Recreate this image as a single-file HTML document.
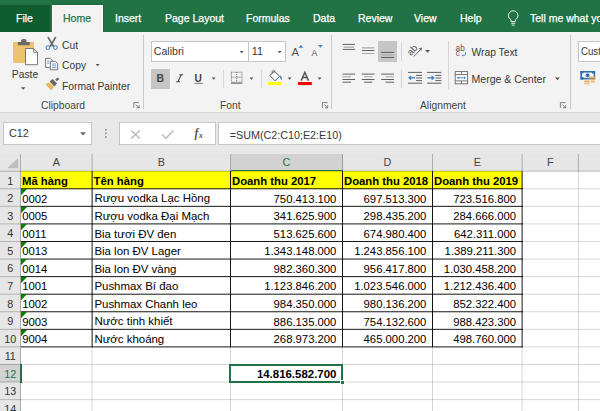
<!DOCTYPE html>
<html><head><meta charset="utf-8">
<style>
*{margin:0;padding:0;box-sizing:border-box}
html,body{width:600px;height:411px;overflow:hidden;background:#fff;font-family:"Liberation Sans",sans-serif}
.a{position:absolute}
.t{position:absolute;white-space:nowrap;line-height:1}
svg{position:absolute;overflow:visible}
</style></head><body>
<div class="a" style="left:0.00px;top:0.00px;width:600.00px;height:32.00px;background:#217346;"></div>
<div class="a" style="left:0.00px;top:5.00px;width:50.00px;height:27.00px;background:#0f5c2f;"></div>
<div class="a" style="left:51.50px;top:4.00px;width:52.00px;height:29.00px;background:#1a6a3e;"></div>
<div class="a" style="left:52.00px;top:5.00px;width:51.00px;height:28.00px;background:#f3f3f3;border:1px solid #fcfcfc;border-bottom:0;"></div>
<div class="t" style="left:16.00px;top:13.09px;font-size:11px;color:#fff;font-weight:400;transform:scaleX(0.955);transform-origin:0 0;-webkit-text-stroke:0.25px #fff;">File</div>
<div class="t" style="left:63.00px;top:13.09px;font-size:11px;color:#217346;font-weight:400;transform:scaleX(0.955);transform-origin:0 0;-webkit-text-stroke:0.25px #217346;">Home</div>
<div class="t" style="left:115.00px;top:13.09px;font-size:11px;color:#fff;font-weight:400;transform:scaleX(0.955);transform-origin:0 0;-webkit-text-stroke:0.25px #fff;">Insert</div>
<div class="t" style="left:165.00px;top:13.09px;font-size:11px;color:#fff;font-weight:400;transform:scaleX(0.955);transform-origin:0 0;-webkit-text-stroke:0.25px #fff;">Page Layout</div>
<div class="t" style="left:246.00px;top:13.09px;font-size:11px;color:#fff;font-weight:400;transform:scaleX(0.955);transform-origin:0 0;-webkit-text-stroke:0.25px #fff;">Formulas</div>
<div class="t" style="left:313.00px;top:13.09px;font-size:11px;color:#fff;font-weight:400;transform:scaleX(0.955);transform-origin:0 0;-webkit-text-stroke:0.25px #fff;">Data</div>
<div class="t" style="left:358.00px;top:13.09px;font-size:11px;color:#fff;font-weight:400;transform:scaleX(0.955);transform-origin:0 0;-webkit-text-stroke:0.25px #fff;">Review</div>
<div class="t" style="left:414.00px;top:13.09px;font-size:11px;color:#fff;font-weight:400;transform:scaleX(0.955);transform-origin:0 0;-webkit-text-stroke:0.25px #fff;">View</div>
<div class="t" style="left:460.00px;top:13.09px;font-size:11px;color:#fff;font-weight:400;transform:scaleX(0.955);transform-origin:0 0;-webkit-text-stroke:0.25px #fff;">Help</div>
<div class="t" style="left:530.00px;top:13.09px;font-size:11px;color:#fff;font-weight:400;transform:scaleX(0.955);transform-origin:0 0;-webkit-text-stroke:0.25px #fff;">Tell me what you want to do</div>
<svg style="left:0;top:0" width="600" height="32" viewBox="0 0 600 32"><path d="M511 21.6v-1.8q-2.6-1.6-2.6-4.2a4.8 4.8 0 0 1 9.6 0q0 2.6-2.6 4.2v1.8z" fill="none" stroke="#fff" stroke-width="0.9"/><path d="M511.2 23.3h4M511.8 25.1h2.8" stroke="#fff" stroke-width="0.9"/></svg>
<div class="a" style="left:0.00px;top:32.00px;width:600.00px;height:80.00px;background:#f3f3f3;"></div>
<div class="a" style="left:0.00px;top:112.00px;width:600.00px;height:1.00px;background:#d9d9d9;"></div>
<div class="a" style="left:143.00px;top:35.00px;width:1.00px;height:73.50px;background:#c9c9c9;"></div>
<div class="a" style="left:331.00px;top:35.00px;width:1.00px;height:73.50px;background:#c9c9c9;"></div>
<div class="a" style="left:570.00px;top:35.00px;width:1.00px;height:73.50px;background:#c9c9c9;"></div>
<div class="a" style="left:223.00px;top:70.00px;width:1.00px;height:18.00px;background:#d6d6d6;"></div>
<div class="a" style="left:261.00px;top:70.00px;width:1.00px;height:18.00px;background:#d6d6d6;"></div>
<div class="a" style="left:401.00px;top:42.00px;width:1.00px;height:19.00px;background:#d6d6d6;"></div>
<div class="a" style="left:401.00px;top:70.00px;width:1.00px;height:18.00px;background:#d6d6d6;"></div>
<div class="a" style="left:448.00px;top:41.00px;width:1.00px;height:48.00px;background:#d6d6d6;"></div>
<div class="t" style="left:11.80px;top:70.18px;font-size:10.3px;color:#383838;font-weight:400;">Paste</div>
<div class="t" style="left:62.00px;top:41.13px;font-size:10.3px;color:#383838;font-weight:400;">Cut</div>
<div class="t" style="left:62.00px;top:61.13px;font-size:10.3px;color:#383838;font-weight:400;">Copy</div>
<div class="t" style="left:62.00px;top:81.63px;font-size:10.3px;color:#383838;font-weight:400;">Format Painter</div>
<div class="t" style="left:41.00px;top:100.78px;font-size:10.3px;color:#444;font-weight:400;">Clipboard</div>
<div class="t" style="left:220.00px;top:100.78px;font-size:10.3px;color:#444;font-weight:400;">Font</div>
<div class="t" style="left:420.00px;top:100.78px;font-size:10.3px;color:#444;font-weight:400;">Alignment</div>
<div class="t" style="left:471.50px;top:48.28px;font-size:10.3px;color:#383838;font-weight:400;">Wrap Text</div>
<div class="t" style="left:471.50px;top:73.87px;font-size:10.55px;color:#383838;font-weight:400;">Merge &amp; Center</div>
<div class="a" style="left:151.00px;top:41.00px;width:135.00px;height:21.00px;background:#fff;border:1px solid #c6c6c6;"></div>
<div class="a" style="left:247.50px;top:41.00px;width:1.00px;height:21.00px;background:#c6c6c6;"></div>
<div class="t" style="left:153.80px;top:46.43px;font-size:10.6px;color:#383838;font-weight:400;">Calibri</div>
<div class="t" style="left:251.70px;top:46.36px;font-size:10.8px;color:#383838;font-weight:400;">11</div>
<div class="a" style="left:578.00px;top:41.00px;width:42.00px;height:21.00px;background:#fff;border:1px solid #c6c6c6;"></div>
<div class="t" style="left:580.80px;top:46.29px;font-size:11px;color:#383838;font-weight:400;transform:scaleX(0.88);transform-origin:0 0;">Custom</div>
<div class="a" style="left:151.00px;top:69.00px;width:19.00px;height:20.00px;background:#c6c6c6;"></div>
<div class="a" style="left:378.00px;top:41.00px;width:19.00px;height:20.50px;background:#c6c6c6;"></div>
<div class="a" style="left:0.00px;top:113.00px;width:600.00px;height:41.00px;background:#e8e8e8;"></div>
<div class="a" style="left:3.00px;top:122.00px;width:89.00px;height:22.50px;background:#fff;border:1px solid #c6c6c6;"></div>
<div class="t" style="left:9.00px;top:127.86px;font-size:10.8px;color:#383838;font-weight:400;">C12</div>
<div class="a" style="left:119.00px;top:122.00px;width:97.00px;height:22.50px;background:#fff;border:1px solid #c6c6c6;"></div>
<div class="a" style="left:218.00px;top:122.00px;width:432.00px;height:22.50px;background:#fff;border:1px solid #c6c6c6;"></div>
<div class="t" style="left:229.75px;top:130.40px;font-size:10.75px;color:#383838;font-weight:400;">=SUM(C2:C10;E2:E10)</div>
<div class="a" style="left:0.00px;top:154.00px;width:600.00px;height:257.00px;background:#fff;"></div>
<div class="a" style="left:0.00px;top:154.00px;width:600.00px;height:17.20px;background:#e6e6e6;"></div>
<div class="a" style="left:0.00px;top:171.20px;width:20.50px;height:239.80px;background:#e6e6e6;"></div>
<div class="a" style="left:230.50px;top:154.00px;width:112.00px;height:17.20px;background:#d2d2d2;"></div>
<div class="a" style="left:0.00px;top:364.47px;width:20.50px;height:17.57px;background:#d2d2d2;"></div>
<div class="a" style="left:20.50px;top:171.20px;width:501.70px;height:17.57px;background:#ffff00;"></div>
<div class="a" style="left:21.00px;top:363px;width:579.00px;height:1px;background:rgba(0,0,0,0.005)"></div>
<div class="a" style="left:21.00px;top:364px;width:579.00px;height:1px;background:rgba(0,0,0,0.155)"></div>
<div class="a" style="left:21.00px;top:381px;width:579.00px;height:1px;background:rgba(0,0,0,0.074)"></div>
<div class="a" style="left:21.00px;top:382px;width:579.00px;height:1px;background:rgba(0,0,0,0.086)"></div>
<div class="a" style="left:21.00px;top:399px;width:579.00px;height:1px;background:rgba(0,0,0,0.142)"></div>
<div class="a" style="left:21.00px;top:400px;width:579.00px;height:1px;background:rgba(0,0,0,0.018)"></div>
<div class="a" style="left:21.00px;top:416px;width:579.00px;height:1px;background:rgba(0,0,0,0.051)"></div>
<div class="a" style="left:21.00px;top:417px;width:579.00px;height:1px;background:rgba(0,0,0,0.109)"></div>
<div class="a" style="left:522.50px;top:188px;width:77.50px;height:1px;background:rgba(0,0,0,0.117)"></div>
<div class="a" style="left:522.50px;top:189px;width:77.50px;height:1px;background:rgba(0,0,0,0.043)"></div>
<div class="a" style="left:522.50px;top:205px;width:77.50px;height:1px;background:rgba(0,0,0,0.026)"></div>
<div class="a" style="left:522.50px;top:206px;width:77.50px;height:1px;background:rgba(0,0,0,0.134)"></div>
<div class="a" style="left:522.50px;top:223px;width:77.50px;height:1px;background:rgba(0,0,0,0.094)"></div>
<div class="a" style="left:522.50px;top:224px;width:77.50px;height:1px;background:rgba(0,0,0,0.066)"></div>
<div class="a" style="left:522.50px;top:240px;width:77.50px;height:1px;background:rgba(0,0,0,0.003)"></div>
<div class="a" style="left:522.50px;top:241px;width:77.50px;height:1px;background:rgba(0,0,0,0.157)"></div>
<div class="a" style="left:522.50px;top:258px;width:77.50px;height:1px;background:rgba(0,0,0,0.072)"></div>
<div class="a" style="left:522.50px;top:259px;width:77.50px;height:1px;background:rgba(0,0,0,0.088)"></div>
<div class="a" style="left:522.50px;top:276px;width:77.50px;height:1px;background:rgba(0,0,0,0.141)"></div>
<div class="a" style="left:522.50px;top:277px;width:77.50px;height:1px;background:rgba(0,0,0,0.019)"></div>
<div class="a" style="left:522.50px;top:293px;width:77.50px;height:1px;background:rgba(0,0,0,0.050)"></div>
<div class="a" style="left:522.50px;top:294px;width:77.50px;height:1px;background:rgba(0,0,0,0.110)"></div>
<div class="a" style="left:522.50px;top:311px;width:77.50px;height:1px;background:rgba(0,0,0,0.118)"></div>
<div class="a" style="left:522.50px;top:312px;width:77.50px;height:1px;background:rgba(0,0,0,0.042)"></div>
<div class="a" style="left:522.50px;top:328px;width:77.50px;height:1px;background:rgba(0,0,0,0.027)"></div>
<div class="a" style="left:522.50px;top:329px;width:77.50px;height:1px;background:rgba(0,0,0,0.133)"></div>
<div class="a" style="left:522.50px;top:346px;width:77.50px;height:1px;background:rgba(0,0,0,0.096)"></div>
<div class="a" style="left:522.50px;top:347px;width:77.50px;height:1px;background:rgba(0,0,0,0.064)"></div>
<div class="a" style="left:91px;top:346.90px;width:1px;height:64.10px;background:rgba(0,0,0,0.064)"></div>
<div class="a" style="left:92px;top:346.90px;width:1px;height:64.10px;background:rgba(0,0,0,0.096)"></div>
<div class="a" style="left:230px;top:346.90px;width:1px;height:64.10px;background:rgba(0,0,0,0.160)"></div>
<div class="a" style="left:342px;top:346.90px;width:1px;height:64.10px;background:rgba(0,0,0,0.160)"></div>
<div class="a" style="left:432px;top:346.90px;width:1px;height:64.10px;background:rgba(0,0,0,0.160)"></div>
<div class="a" style="left:521px;top:346.90px;width:1px;height:64.10px;background:rgba(0,0,0,0.064)"></div>
<div class="a" style="left:522px;top:346.90px;width:1px;height:64.10px;background:rgba(0,0,0,0.096)"></div>
<div class="a" style="left:577px;top:171.20px;width:1px;height:239.80px;background:rgba(0,0,0,0.016)"></div>
<div class="a" style="left:578px;top:171.20px;width:1px;height:239.80px;background:rgba(0,0,0,0.144)"></div>
<div class="a" style="left:91px;top:154.00px;width:1px;height:17.20px;background:rgba(0,0,0,0.100)"></div>
<div class="a" style="left:92px;top:154.00px;width:1px;height:17.20px;background:rgba(0,0,0,0.150)"></div>
<div class="a" style="left:230px;top:154.00px;width:1px;height:17.20px;background:rgba(0,0,0,0.250)"></div>
<div class="a" style="left:342px;top:154.00px;width:1px;height:17.20px;background:rgba(0,0,0,0.250)"></div>
<div class="a" style="left:432px;top:154.00px;width:1px;height:17.20px;background:rgba(0,0,0,0.250)"></div>
<div class="a" style="left:521px;top:154.00px;width:1px;height:17.20px;background:rgba(0,0,0,0.100)"></div>
<div class="a" style="left:522px;top:154.00px;width:1px;height:17.20px;background:rgba(0,0,0,0.150)"></div>
<div class="a" style="left:577px;top:154.00px;width:1px;height:17.20px;background:rgba(0,0,0,0.025)"></div>
<div class="a" style="left:578px;top:154.00px;width:1px;height:17.20px;background:rgba(0,0,0,0.225)"></div>
<div class="a" style="left:20px;top:154.00px;width:1px;height:257.00px;background:rgba(0,0,0,0.250)"></div>
<div class="a" style="left:0.00px;top:188px;width:20.50px;height:1px;background:rgba(0,0,0,0.161)"></div>
<div class="a" style="left:0.00px;top:189px;width:20.50px;height:1px;background:rgba(0,0,0,0.059)"></div>
<div class="a" style="left:0.00px;top:205px;width:20.50px;height:1px;background:rgba(0,0,0,0.035)"></div>
<div class="a" style="left:0.00px;top:206px;width:20.50px;height:1px;background:rgba(0,0,0,0.185)"></div>
<div class="a" style="left:0.00px;top:223px;width:20.50px;height:1px;background:rgba(0,0,0,0.130)"></div>
<div class="a" style="left:0.00px;top:224px;width:20.50px;height:1px;background:rgba(0,0,0,0.090)"></div>
<div class="a" style="left:0.00px;top:240px;width:20.50px;height:1px;background:rgba(0,0,0,0.004)"></div>
<div class="a" style="left:0.00px;top:241px;width:20.50px;height:1px;background:rgba(0,0,0,0.216)"></div>
<div class="a" style="left:0.00px;top:258px;width:20.50px;height:1px;background:rgba(0,0,0,0.099)"></div>
<div class="a" style="left:0.00px;top:259px;width:20.50px;height:1px;background:rgba(0,0,0,0.121)"></div>
<div class="a" style="left:0.00px;top:276px;width:20.50px;height:1px;background:rgba(0,0,0,0.194)"></div>
<div class="a" style="left:0.00px;top:277px;width:20.50px;height:1px;background:rgba(0,0,0,0.026)"></div>
<div class="a" style="left:0.00px;top:293px;width:20.50px;height:1px;background:rgba(0,0,0,0.068)"></div>
<div class="a" style="left:0.00px;top:294px;width:20.50px;height:1px;background:rgba(0,0,0,0.152)"></div>
<div class="a" style="left:0.00px;top:311px;width:20.50px;height:1px;background:rgba(0,0,0,0.163)"></div>
<div class="a" style="left:0.00px;top:312px;width:20.50px;height:1px;background:rgba(0,0,0,0.057)"></div>
<div class="a" style="left:0.00px;top:328px;width:20.50px;height:1px;background:rgba(0,0,0,0.037)"></div>
<div class="a" style="left:0.00px;top:329px;width:20.50px;height:1px;background:rgba(0,0,0,0.183)"></div>
<div class="a" style="left:0.00px;top:346px;width:20.50px;height:1px;background:rgba(0,0,0,0.132)"></div>
<div class="a" style="left:0.00px;top:347px;width:20.50px;height:1px;background:rgba(0,0,0,0.088)"></div>
<div class="a" style="left:0.00px;top:363px;width:20.50px;height:1px;background:rgba(0,0,0,0.007)"></div>
<div class="a" style="left:0.00px;top:364px;width:20.50px;height:1px;background:rgba(0,0,0,0.213)"></div>
<div class="a" style="left:0.00px;top:381px;width:20.50px;height:1px;background:rgba(0,0,0,0.101)"></div>
<div class="a" style="left:0.00px;top:382px;width:20.50px;height:1px;background:rgba(0,0,0,0.119)"></div>
<div class="a" style="left:0.00px;top:399px;width:20.50px;height:1px;background:rgba(0,0,0,0.196)"></div>
<div class="a" style="left:0.00px;top:400px;width:20.50px;height:1px;background:rgba(0,0,0,0.024)"></div>
<div class="a" style="left:0.00px;top:416px;width:20.50px;height:1px;background:rgba(0,0,0,0.070)"></div>
<div class="a" style="left:0.00px;top:417px;width:20.50px;height:1px;background:rgba(0,0,0,0.150)"></div>
<div class="a" style="left:0.00px;top:170px;width:600.00px;height:1px;background:rgba(0,0,0,0.075)"></div>
<div class="a" style="left:0.00px;top:171px;width:600.00px;height:1px;background:rgba(0,0,0,0.175)"></div>
<div class="a" style="left:20.50px;top:188px;width:502.10px;height:1px;background:rgba(0,0,0,0.672)"></div>
<div class="a" style="left:20.50px;top:189px;width:502.10px;height:1px;background:rgba(0,0,0,0.248)"></div>
<div class="a" style="left:20.50px;top:205px;width:502.10px;height:1px;background:rgba(0,0,0,0.147)"></div>
<div class="a" style="left:20.50px;top:206px;width:502.10px;height:1px;background:rgba(0,0,0,0.773)"></div>
<div class="a" style="left:20.50px;top:223px;width:502.10px;height:1px;background:rgba(0,0,0,0.543)"></div>
<div class="a" style="left:20.50px;top:224px;width:502.10px;height:1px;background:rgba(0,0,0,0.377)"></div>
<div class="a" style="left:20.50px;top:240px;width:502.10px;height:1px;background:rgba(0,0,0,0.018)"></div>
<div class="a" style="left:20.50px;top:241px;width:502.10px;height:1px;background:rgba(0,0,0,0.902)"></div>
<div class="a" style="left:20.50px;top:258px;width:502.10px;height:1px;background:rgba(0,0,0,0.414)"></div>
<div class="a" style="left:20.50px;top:259px;width:502.10px;height:1px;background:rgba(0,0,0,0.506)"></div>
<div class="a" style="left:20.50px;top:276px;width:502.10px;height:1px;background:rgba(0,0,0,0.810)"></div>
<div class="a" style="left:20.50px;top:277px;width:502.10px;height:1px;background:rgba(0,0,0,0.110)"></div>
<div class="a" style="left:20.50px;top:293px;width:502.10px;height:1px;background:rgba(0,0,0,0.285)"></div>
<div class="a" style="left:20.50px;top:294px;width:502.10px;height:1px;background:rgba(0,0,0,0.635)"></div>
<div class="a" style="left:20.50px;top:311px;width:502.10px;height:1px;background:rgba(0,0,0,0.681)"></div>
<div class="a" style="left:20.50px;top:312px;width:502.10px;height:1px;background:rgba(0,0,0,0.239)"></div>
<div class="a" style="left:20.50px;top:328px;width:502.10px;height:1px;background:rgba(0,0,0,0.156)"></div>
<div class="a" style="left:20.50px;top:329px;width:502.10px;height:1px;background:rgba(0,0,0,0.764)"></div>
<div class="a" style="left:20.50px;top:346px;width:502.10px;height:1px;background:rgba(0,0,0,0.552)"></div>
<div class="a" style="left:20.50px;top:347px;width:502.10px;height:1px;background:rgba(0,0,0,0.368)"></div>
<div class="a" style="left:91px;top:171.20px;width:1px;height:176.20px;background:rgba(0,0,0,0.368)"></div>
<div class="a" style="left:92px;top:171.20px;width:1px;height:176.20px;background:rgba(0,0,0,0.552)"></div>
<div class="a" style="left:230px;top:171.20px;width:1px;height:176.20px;background:rgba(0,0,0,0.920)"></div>
<div class="a" style="left:342px;top:171.20px;width:1px;height:176.20px;background:rgba(0,0,0,0.920)"></div>
<div class="a" style="left:432px;top:171.20px;width:1px;height:176.20px;background:rgba(0,0,0,0.920)"></div>
<div class="a" style="left:521px;top:171.20px;width:1px;height:176.20px;background:rgba(0,0,0,0.368)"></div>
<div class="a" style="left:522px;top:171.20px;width:1px;height:176.20px;background:rgba(0,0,0,0.552)"></div>
<div class="t" style="left:20.50px;width:71.60px;text-align:center;top:157.16px;font-size:10.8px;color:#444">A</div>
<div class="t" style="left:92.10px;width:138.40px;text-align:center;top:157.16px;font-size:10.8px;color:#444">B</div>
<div class="t" style="left:230.50px;width:112.00px;text-align:center;top:157.16px;font-size:10.8px;color:#217346">C</div>
<div class="t" style="left:342.50px;width:90.00px;text-align:center;top:157.16px;font-size:10.8px;color:#444">D</div>
<div class="t" style="left:432.50px;width:89.60px;text-align:center;top:157.16px;font-size:10.8px;color:#444">E</div>
<div class="t" style="left:522.10px;width:56.30px;text-align:center;top:157.16px;font-size:10.8px;color:#444">F</div>
<div class="t" style="left:0;width:20.5px;text-align:center;top:175.63px;font-size:10.8px;color:#333">1</div>
<div class="t" style="left:0;width:20.5px;text-align:center;top:193.20px;font-size:10.8px;color:#333">2</div>
<div class="t" style="left:0;width:20.5px;text-align:center;top:210.77px;font-size:10.8px;color:#333">3</div>
<div class="t" style="left:0;width:20.5px;text-align:center;top:228.34px;font-size:10.8px;color:#333">4</div>
<div class="t" style="left:0;width:20.5px;text-align:center;top:245.91px;font-size:10.8px;color:#333">5</div>
<div class="t" style="left:0;width:20.5px;text-align:center;top:263.48px;font-size:10.8px;color:#333">6</div>
<div class="t" style="left:0;width:20.5px;text-align:center;top:281.05px;font-size:10.8px;color:#333">7</div>
<div class="t" style="left:0;width:20.5px;text-align:center;top:298.62px;font-size:10.8px;color:#333">8</div>
<div class="t" style="left:0;width:20.5px;text-align:center;top:316.19px;font-size:10.8px;color:#333">9</div>
<div class="t" style="left:0;width:20.5px;text-align:center;top:333.76px;font-size:10.8px;color:#333">10</div>
<div class="t" style="left:0;width:20.5px;text-align:center;top:351.33px;font-size:10.8px;color:#333">11</div>
<div class="t" style="left:0;width:20.5px;text-align:center;top:368.90px;font-size:10.8px;color:#217346">12</div>
<div class="t" style="left:0;width:20.5px;text-align:center;top:386.47px;font-size:10.8px;color:#333">13</div>
<div class="t" style="left:0;width:20.5px;text-align:center;top:404.04px;font-size:10.8px;color:#333">14</div>
<div class="t" style="left:22.00px;top:176.00px;font-size:11.3px;color:#000;font-weight:700;">Mã hàng</div>
<div class="t" style="left:93.60px;top:176.00px;font-size:11.3px;color:#000;font-weight:700;">Tên hàng</div>
<div class="t" style="left:232.00px;top:176.00px;font-size:11.3px;color:#000;font-weight:700;">Doanh thu 2017</div>
<div class="t" style="left:344.00px;top:176.00px;font-size:11.3px;color:#000;font-weight:700;">Doanh thu 2018</div>
<div class="t" style="left:434.00px;top:176.00px;font-size:11.3px;color:#000;font-weight:700;">Doanh thu 2019</div>
<div class="t" style="left:22.20px;top:193.57px;font-size:11.3px;color:#000;font-weight:400;">0002</div>
<div class="t" style="left:94.40px;top:193.45px;font-size:11.45px;color:#000;font-weight:400;">Rượu vodka Lạc Hồng</div>
<div class="t" style="right:263.60px;top:193.57px;font-size:11.3px;color:#000;font-weight:400">750.413.100</div>
<div class="t" style="right:173.60px;top:193.57px;font-size:11.3px;color:#000;font-weight:400">697.513.300</div>
<div class="t" style="right:84.00px;top:193.57px;font-size:11.3px;color:#000;font-weight:400">723.516.800</div>
<svg style="left:21px;top:189.07px" width="7" height="7"><path d="M0 0H6L0 6.2Z" fill="#008000"/></svg>
<div class="t" style="left:22.20px;top:211.14px;font-size:11.3px;color:#000;font-weight:400;">0005</div>
<div class="t" style="left:94.40px;top:211.02px;font-size:11.45px;color:#000;font-weight:400;">Rượu vodka Đại Mạch</div>
<div class="t" style="right:263.60px;top:211.14px;font-size:11.3px;color:#000;font-weight:400">341.625.900</div>
<div class="t" style="right:173.60px;top:211.14px;font-size:11.3px;color:#000;font-weight:400">298.435.200</div>
<div class="t" style="right:84.00px;top:211.14px;font-size:11.3px;color:#000;font-weight:400">284.666.000</div>
<svg style="left:21px;top:206.64px" width="7" height="7"><path d="M0 0H6L0 6.2Z" fill="#008000"/></svg>
<div class="t" style="left:22.20px;top:228.71px;font-size:11.3px;color:#000;font-weight:400;">0011</div>
<div class="t" style="left:94.40px;top:228.59px;font-size:11.45px;color:#000;font-weight:400;">Bia tươi ĐV đen</div>
<div class="t" style="right:263.60px;top:228.71px;font-size:11.3px;color:#000;font-weight:400">513.625.600</div>
<div class="t" style="right:173.60px;top:228.71px;font-size:11.3px;color:#000;font-weight:400">674.980.400</div>
<div class="t" style="right:84.00px;top:228.71px;font-size:11.3px;color:#000;font-weight:400">642.311.000</div>
<svg style="left:21px;top:224.21px" width="7" height="7"><path d="M0 0H6L0 6.2Z" fill="#008000"/></svg>
<div class="t" style="left:22.20px;top:246.28px;font-size:11.3px;color:#000;font-weight:400;">0013</div>
<div class="t" style="left:94.40px;top:246.16px;font-size:11.45px;color:#000;font-weight:400;">Bia lon ĐV Lager</div>
<div class="t" style="right:263.60px;top:246.28px;font-size:11.3px;color:#000;font-weight:400">1.343.148.000</div>
<div class="t" style="right:173.60px;top:246.28px;font-size:11.3px;color:#000;font-weight:400">1.243.856.100</div>
<div class="t" style="right:84.00px;top:246.28px;font-size:11.3px;color:#000;font-weight:400">1.389.211.300</div>
<svg style="left:21px;top:241.78px" width="7" height="7"><path d="M0 0H6L0 6.2Z" fill="#008000"/></svg>
<div class="t" style="left:22.20px;top:263.85px;font-size:11.3px;color:#000;font-weight:400;">0014</div>
<div class="t" style="left:94.40px;top:263.73px;font-size:11.45px;color:#000;font-weight:400;">Bia lon ĐV vàng</div>
<div class="t" style="right:263.60px;top:263.85px;font-size:11.3px;color:#000;font-weight:400">982.360.300</div>
<div class="t" style="right:173.60px;top:263.85px;font-size:11.3px;color:#000;font-weight:400">956.417.800</div>
<div class="t" style="right:84.00px;top:263.85px;font-size:11.3px;color:#000;font-weight:400">1.030.458.200</div>
<svg style="left:21px;top:259.35px" width="7" height="7"><path d="M0 0H6L0 6.2Z" fill="#008000"/></svg>
<div class="t" style="left:22.20px;top:281.42px;font-size:11.3px;color:#000;font-weight:400;">1001</div>
<div class="t" style="left:94.40px;top:281.30px;font-size:11.45px;color:#000;font-weight:400;">Pushmax Bí đao</div>
<div class="t" style="right:263.60px;top:281.42px;font-size:11.3px;color:#000;font-weight:400">1.123.846.200</div>
<div class="t" style="right:173.60px;top:281.42px;font-size:11.3px;color:#000;font-weight:400">1.023.546.000</div>
<div class="t" style="right:84.00px;top:281.42px;font-size:11.3px;color:#000;font-weight:400">1.212.436.400</div>
<svg style="left:21px;top:276.92px" width="7" height="7"><path d="M0 0H6L0 6.2Z" fill="#008000"/></svg>
<div class="t" style="left:22.20px;top:298.99px;font-size:11.3px;color:#000;font-weight:400;">1002</div>
<div class="t" style="left:94.40px;top:298.87px;font-size:11.45px;color:#000;font-weight:400;">Pushmax Chanh leo</div>
<div class="t" style="right:263.60px;top:298.99px;font-size:11.3px;color:#000;font-weight:400">984.350.000</div>
<div class="t" style="right:173.60px;top:298.99px;font-size:11.3px;color:#000;font-weight:400">980.136.200</div>
<div class="t" style="right:84.00px;top:298.99px;font-size:11.3px;color:#000;font-weight:400">852.322.400</div>
<svg style="left:21px;top:294.49px" width="7" height="7"><path d="M0 0H6L0 6.2Z" fill="#008000"/></svg>
<div class="t" style="left:22.20px;top:316.56px;font-size:11.3px;color:#000;font-weight:400;">9003</div>
<div class="t" style="left:94.40px;top:316.44px;font-size:11.45px;color:#000;font-weight:400;">Nước tinh khiết</div>
<div class="t" style="right:263.60px;top:316.56px;font-size:11.3px;color:#000;font-weight:400">886.135.000</div>
<div class="t" style="right:173.60px;top:316.56px;font-size:11.3px;color:#000;font-weight:400">754.132.600</div>
<div class="t" style="right:84.00px;top:316.56px;font-size:11.3px;color:#000;font-weight:400">988.423.300</div>
<svg style="left:21px;top:312.06px" width="7" height="7"><path d="M0 0H6L0 6.2Z" fill="#008000"/></svg>
<div class="t" style="left:22.20px;top:334.13px;font-size:11.3px;color:#000;font-weight:400;">9004</div>
<div class="t" style="left:94.40px;top:334.01px;font-size:11.45px;color:#000;font-weight:400;">Nước khoáng</div>
<div class="t" style="right:263.60px;top:334.13px;font-size:11.3px;color:#000;font-weight:400">268.973.200</div>
<div class="t" style="right:173.60px;top:334.13px;font-size:11.3px;color:#000;font-weight:400">465.000.200</div>
<div class="t" style="right:84.00px;top:334.13px;font-size:11.3px;color:#000;font-weight:400">498.760.000</div>
<svg style="left:21px;top:329.63px" width="7" height="7"><path d="M0 0H6L0 6.2Z" fill="#008000"/></svg>
<div class="a" style="left:19.50px;top:364.47px;width:2.00px;height:18.07px;background:#217346;"></div>
<div class="a" style="left:230.50px;top:169.70px;width:112.00px;height:1.80px;background:#217346;"></div>
<div class="a" style="left:229.30px;top:363.80px;width:114.00px;height:19.50px;border:2px solid #217346;"></div>
<div class="a" style="left:339.50px;top:379.50px;width:5.00px;height:5.00px;background:#217346;border:1px solid #fff;"></div>
<div class="t" style="right:263.60px;top:369.15px;font-size:11.45px;color:#000;font-weight:700">14.816.582.700</div>
<svg style="left:0;top:0" width="600" height="160" viewBox="0 0 600 160">
<!-- paste -->
<path d="M13 42h21v19.5a1.5 1.5 0 0 1-1.5 1.5H14.5A1.5 1.5 0 0 1 13 61.5z" fill="#eec370"/>
<rect x="17.8" y="42" width="12" height="3.2" rx="0.8" fill="#6a6a6a"/>
<rect x="21" y="39" width="5.6" height="4" rx="2" fill="#6a6a6a"/>
<path d="M25.5 48.5h8.2l3.8 3.8v12.4h-12z" fill="#fff" stroke="#6a6a6a" stroke-width="0.9"/>
<path d="M33.7 48.5v3.8h3.8" fill="none" stroke="#6a6a6a" stroke-width="0.9"/>
<path d="M21 87.3h4.4l-2.2 2.5z" fill="#555"/>
<!-- cut -->
<path d="M48.3 37.6L53.4 46.2M55.4 37.6L50.3 46.2" stroke="#6a6a6a" stroke-width="1.7" stroke-linecap="round"/>
<circle cx="47.9" cy="47.6" r="1.85" fill="none" stroke="#4a86c8" stroke-width="1.1"/>
<circle cx="55.4" cy="47.6" r="1.85" fill="none" stroke="#4a86c8" stroke-width="1.1"/>
<!-- copy -->
<path d="M45.6 58.4h4.6l2 2v7h-6.6z" fill="#fff" stroke="#666" stroke-width="0.9"/>
<path d="M47.2 61.2h2M47.2 63.2h2.2" stroke="#4a86c8" stroke-width="0.9"/>
<path d="M50.4 61.3h5l2.2 2.2v6.3h-7.2z" fill="#fff" stroke="#666" stroke-width="0.9"/>
<path d="M52 64h4.2M52 65.8h4.2M52 67.6h4.2" stroke="#4a86c8" stroke-width="0.8"/>
<path d="M95.6 64h4l-2 2.2z" fill="#555"/>
<!-- format painter -->
<path d="M45.4 84.2L49 82.3L54.2 86.9L51.2 90.4z" fill="#e9b862"/>
<path d="M49.6 81.6L52.6 79L57 83.4L54.3 86.4z" fill="#666"/>
<path d="M55.2 79.6L57.8 77.4L59.4 79L56.9 81.3z" fill="#666"/>
<!-- font name arrows -->
<path d="M239.7 51h4l-2 2.2z" fill="#555"/>
<path d="M277.7 51h4l-2 2.2z" fill="#555"/>
<!-- grow / shrink -->
<text x="291.4" y="55.8" font-family="Liberation Sans" font-size="11.2" fill="#555">A</text>
<path d="M298.6 47.8h4.6l-2.3-2.8z" fill="#3f7fc5"/>
<text x="311.5" y="55.8" font-family="Liberation Sans" font-size="8.8" fill="#555">A</text>
<path d="M318 45h4.8l-2.4 2.8z" fill="#3f7fc5"/>
<!-- B I U -->
<text x="156.6" y="82" font-family="Liberation Sans" font-weight="bold" font-size="10.4" fill="#444">B</text>
<path d="M181.2 74.8L178 81.8M176.2 81.8h3.8M179.4 74.8h3.8" stroke="#444" stroke-width="1.1" fill="none"/>
<text x="194.6" y="81.6" font-family="Liberation Sans" font-weight="bold" font-size="10.2" fill="#444">U</text>
<path d="M194.6 83.4h8.2" stroke="#777" stroke-width="1"/>
<path d="M211.7 77.5h4l-2 2.3z" fill="#555"/>
<!-- borders -->
<g fill="none" stroke="#666" stroke-width="1" stroke-dasharray="1 1">
<rect x="231.4" y="72.2" width="10.6" height="10"/>
<path d="M236.7 72.2v10M231.4 77.2h10.6"/>
</g>
<path d="M231 83.2h11.4" stroke="#666" stroke-width="1"/>
<path d="M249.5 77.5h4l-2 2.3z" fill="#555"/>
<!-- fill color -->
<path d="M269.8 75.6L274.4 71.2L279.6 76.4L275 80.8z" fill="#fff" stroke="#5a5a5a" stroke-width="1"/>
<path d="M272.2 73.6q-0.6-2.8 1.2-3.2q1.6-0.2 1.8 2.6" fill="none" stroke="#5a5a5a" stroke-width="0.9"/>
<path d="M280 75.2q2.4 1.6 2 4.6q-2.2-0.6-2-4.6z" fill="#3f7fc5"/>
<rect x="267.6" y="82" width="14.2" height="3.1" fill="#ffff00"/>
<path d="M287.6 77.5h4l-2 2.3z" fill="#555"/>
<!-- font color -->
<path d="M301.2 80.6L304.85 72.3L308.5 80.6M302.7 77.6H307" fill="none" stroke="#555" stroke-width="1.5"/>
<rect x="297.9" y="82" width="13.9" height="3.1" fill="#ff0000"/>
<path d="M317.6 77.5h4l-2 2.3z" fill="#555"/>
<!-- launchers -->
<g fill="none" stroke="#666" stroke-width="0.8">
<path d="M133.8 107.8v-5.2h5.2M135.8 104.6l3.3 3.3M136.4 107.8h2.7v-2.7"/>
<path d="M322.4 107.8v-5.2h5.2M324.4 104.6l3.3 3.3M325 107.8h2.7v-2.7"/>
<path d="M560.4 107.8v-5.2h5.2M562.4 104.6l3.3 3.3M563 107.8h2.7v-2.7"/>
</g>
<!-- vertical align -->
<path d="M342.8 44.4h12.3M342.8 49.4h12.3M362 50.5h12.3M381.2 52.4h12.8M381.2 57.5h12.8" stroke="#5f5f5f" stroke-width="1"/>
<path d="M343.8 47.1h10.3M362 47.9h12.3M362 53.5h12.3M382.2 55h10.8" stroke="#a8a8a8" stroke-width="1.1"/>
<!-- horizontal align -->
<path d="M342.5 74.1h12.6M342.5 79.5h12.6M342.5 82.2h8.5" stroke="#5f5f5f" stroke-width="1"/>
<path d="M342.5 76.8h8.5" stroke="#a8a8a8" stroke-width="1.1"/>
<path d="M361.8 74.1h12.6M361.8 79.5h12.6M364 82.2h8.2" stroke="#5f5f5f" stroke-width="1"/>
<path d="M364 76.8h8.2" stroke="#a8a8a8" stroke-width="1.1"/>
<path d="M381.2 74.1h12.8M381.2 79.5h12.8M385.5 82.2h8.5" stroke="#5f5f5f" stroke-width="1"/>
<path d="M385.5 76.8h8.5" stroke="#a8a8a8" stroke-width="1.1"/>
<!-- orientation -->
<text transform="translate(411 56.2) rotate(-48)" font-family="Liberation Sans" font-size="9.6" fill="#555">ab</text>
<path d="M413.8 56.4L421 49.2" stroke="#666" stroke-width="1"/>
<path d="M418.6 48.4L422 47.6L421.3 51z" fill="#666"/>
<path d="M425.1 50h5l-2.5 2.8z" fill="#555"/>
<!-- indent -->
<path d="M408 72.4h14M416 75.4h6M416 78h6M416 80.6h6M408 83.2h14" stroke="#5f5f5f" stroke-width="1"/>
<path d="M409 77.8h6" stroke="#3f7fc5" stroke-width="1.3"/>
<path d="M408.2 77.8l3-2.6v5.2z" fill="#3f7fc5"/>
<path d="M427 72.4h14.4M435.4 75.4h6M435.4 78h6M435.4 80.6h6M427 83.2h14.4" stroke="#5f5f5f" stroke-width="1"/>
<path d="M427.4 77.8h6" stroke="#3f7fc5" stroke-width="1.3"/>
<path d="M434.6 77.8l-3-2.6v5.2z" fill="#3f7fc5"/>
<!-- wrap text -->
<text x="455.6" y="50.6" font-family="Liberation Sans" font-size="8.2" fill="#555">ab</text>
<text x="455.8" y="56" font-family="Liberation Sans" font-size="8.2" fill="#555">c</text>
<path d="M465.6 52.2v1.8q0 1.4-1.4 1.4h-1" fill="none" stroke="#3f7fc5" stroke-width="0.9"/>
<path d="M463.2 54.2v2.4l-1.4-1.2z" fill="#3f7fc5"/>
<!-- merge -->
<rect x="455.2" y="71.6" width="12.4" height="12.2" fill="#fff" stroke="#666" stroke-width="0.9"/>
<path d="M455.2 74.6h12.4M455.2 80.9h12.4M461.4 71.6v3M461.4 80.9v2.9" stroke="#666" stroke-width="0.9"/>
<path d="M457.6 77.8h7.6" stroke="#3f7fc5" stroke-width="0.9"/>
<path d="M456.9 77.8l1.8-1.5v3z M465.9 77.8l-1.8-1.5v3z" fill="#3f7fc5"/>
<path d="M555 77.6h4.8l-2.4 2.7z" fill="#555"/>
<!-- currency -->
<rect x="581.2" y="71.8" width="13.2" height="6.8" fill="#fff" stroke="#2f6db5" stroke-width="1.6"/>
<path d="M580.4 71h3v2.4q-1.5 0-3 -0.2zM595 71h-3v2.4q1.5 0 3-0.2zM580.4 79.4h3v-2.4q-1.5 0-3 0.2z" fill="#2f6db5"/>
<circle cx="587.6" cy="75.2" r="1.9" fill="#2f6db5"/>
<rect x="588.4" y="76.6" width="6.6" height="1.8" rx="0.9" fill="#eab060"/>
<rect x="590.6" y="79" width="4.4" height="1.4" rx="0.7" fill="#eab060"/>
<rect x="590.6" y="81.2" width="4.4" height="1.4" rx="0.7" fill="#eab060"/>
<rect x="584" y="80.6" width="6" height="1.8" rx="0.9" fill="#eab060"/>
<rect x="584" y="83" width="6" height="1.6" rx="0.8" fill="#f0c890"/>
<!-- formula bar -->
<path d="M80 132.2h6l-3 3.2z" fill="#666"/>
<rect x="105" y="129" width="1.6" height="1.6" fill="#8a8a8a"/>
<rect x="105" y="132.6" width="1.6" height="1.6" fill="#8a8a8a"/>
<rect x="105" y="136.2" width="1.6" height="1.6" fill="#8a8a8a"/>
<path d="M131.2 130.4L139.8 138.4M139.8 130.4L131.2 138.4" stroke="#b8b8b8" stroke-width="1.4"/>
<path d="M162.2 134.4L166 138.3L173.5 130.4" fill="none" stroke="#c2c2c2" stroke-width="1.7"/>
<text x="194.4" y="137.4" font-family="Liberation Serif" font-style="italic" font-weight="bold" font-size="11.5" fill="#555">f</text>
<text x="198.8" y="138.3" font-family="Liberation Serif" font-style="italic" font-weight="bold" font-size="8.4" fill="#555">x</text>
<!-- select-all triangle -->
<path d="M18.2 158V168.2H7.2z" fill="#bdbdbd"/>
</svg>
</body></html>
